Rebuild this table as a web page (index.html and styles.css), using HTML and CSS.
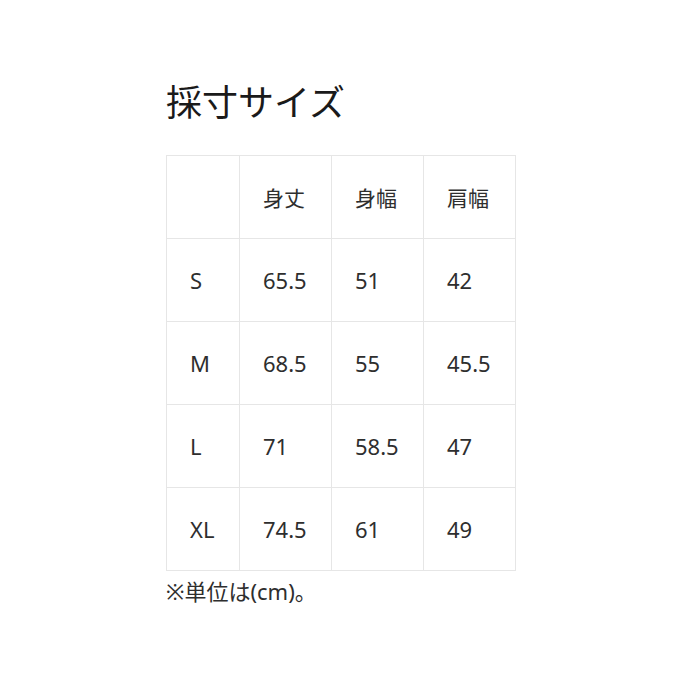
FILE: index.html
```html
<!DOCTYPE html>
<html lang="ja">
<head>
<meta charset="utf-8">
<link rel="stylesheet" href="styles.css">
</head>
<body>
<main class="sizes">
  <h1 class="title">採寸サイズ</h1>
  <table class="size-table">
    <tr><td></td><td>身丈</td><td>身幅</td><td>肩幅</td></tr>
    <tr><td>S</td><td>65.5</td><td>51</td><td>42</td></tr>
    <tr><td>M</td><td>68.5</td><td>55</td><td>45.5</td></tr>
    <tr><td>L</td><td>71</td><td>58.5</td><td>47</td></tr>
    <tr><td>XL</td><td>74.5</td><td>61</td><td>49</td></tr>
  </table>
  <p class="note">※単位は(cm)。</p>
</main>
</body>
</html>
```
FILE: styles.css
```css
html, body {
  margin: 0;
  padding: 0;
  background: #fff;
}
body {
  font-family: "Noto Sans", "Noto Sans CJK JP", sans-serif;
  color: #2b2b2b;
}
.sizes {
  width: 350px;
  margin: 0 0 0 166px;
  padding-top: 74px;
}
.title {
  margin: 0 0 29px;
  font-family: "Noto Sans CJK JP", sans-serif;
  font-weight: 400;
  font-size: 36px;
  line-height: 52px;
  color: #1a1a1a;
}
.size-table {
  border-collapse: collapse;
  width: 350px;
  table-layout: fixed;
}
.size-table td {
  border: 1px solid #e6e6e6;
  height: 82px;
  padding: 0 0 0 23px;
  font-size: 22px;
  vertical-align: middle;
  color: #2e2e2e;
}
.size-table td:first-child {
  width: 49px;
}
.size-table tr:first-child td {
  font-family: "Noto Sans CJK JP", sans-serif;
  font-size: 21px;
}
.note {
  margin: 5px 0 0;
  font-size: 22px;
  line-height: 30px;
  font-family: "Noto Sans", "Noto Sans CJK JP", sans-serif;
  color: #2e2e2e;
}
```
